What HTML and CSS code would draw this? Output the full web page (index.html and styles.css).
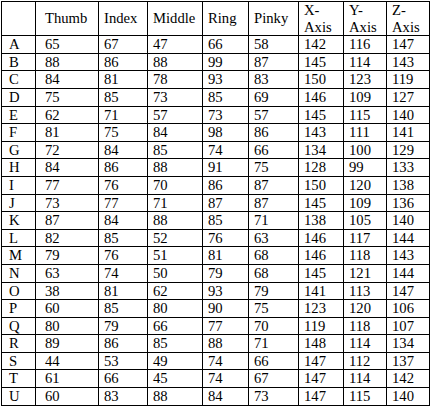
FILE: index.html
```html
<!DOCTYPE html>
<html>
<head>
<meta charset="utf-8">
<link rel="stylesheet" href="styles.css">
</head>
<body>
<table class="data">
<colgroup>
<col class="c0"><col class="c1"><col class="c2"><col class="c3"><col class="c4"><col class="c5"><col class="c6"><col class="c7"><col class="c8">
</colgroup>
<thead>
<tr><th class="lbl"></th><th class="thumb">Thumb</th><th>Index</th><th>Middle</th><th>Ring</th><th>Pinky</th><th>X-<br>Axis</th><th>Y-<br>Axis</th><th>Z-<br>Axis</th></tr>
</thead>
<tbody>
<tr><td class="lbl">A</td><td class="thumb">65</td><td>67</td><td>47</td><td>66</td><td>58</td><td>142</td><td>116</td><td>147</td></tr>
<tr><td class="lbl">B</td><td class="thumb">88</td><td>86</td><td>88</td><td>99</td><td>87</td><td>145</td><td>114</td><td>143</td></tr>
<tr><td class="lbl">C</td><td class="thumb">84</td><td>81</td><td>78</td><td>93</td><td>83</td><td>150</td><td>123</td><td>119</td></tr>
<tr><td class="lbl">D</td><td class="thumb">75</td><td>85</td><td>73</td><td>85</td><td>69</td><td>146</td><td>109</td><td>127</td></tr>
<tr><td class="lbl">E</td><td class="thumb">62</td><td>71</td><td>57</td><td>73</td><td>57</td><td>145</td><td>115</td><td>140</td></tr>
<tr><td class="lbl">F</td><td class="thumb">81</td><td>75</td><td>84</td><td>98</td><td>86</td><td>143</td><td>111</td><td>141</td></tr>
<tr><td class="lbl">G</td><td class="thumb">72</td><td>84</td><td>85</td><td>74</td><td>66</td><td>134</td><td>100</td><td>129</td></tr>
<tr><td class="lbl">H</td><td class="thumb">84</td><td>86</td><td>88</td><td>91</td><td>75</td><td>128</td><td>99</td><td>133</td></tr>
<tr><td class="lbl">I</td><td class="thumb">77</td><td>76</td><td>70</td><td>86</td><td>87</td><td>150</td><td>120</td><td>138</td></tr>
<tr><td class="lbl">J</td><td class="thumb">73</td><td>77</td><td>71</td><td>87</td><td>87</td><td>145</td><td>109</td><td>136</td></tr>
<tr><td class="lbl">K</td><td class="thumb">87</td><td>84</td><td>88</td><td>85</td><td>71</td><td>138</td><td>105</td><td>140</td></tr>
<tr><td class="lbl">L</td><td class="thumb">82</td><td>85</td><td>52</td><td>76</td><td>63</td><td>146</td><td>117</td><td>144</td></tr>
<tr><td class="lbl">M</td><td class="thumb">79</td><td>76</td><td>51</td><td>81</td><td>68</td><td>146</td><td>118</td><td>143</td></tr>
<tr><td class="lbl">N</td><td class="thumb">63</td><td>74</td><td>50</td><td>79</td><td>68</td><td>145</td><td>121</td><td>144</td></tr>
<tr><td class="lbl">O</td><td class="thumb">38</td><td>81</td><td>62</td><td>93</td><td>79</td><td>141</td><td>113</td><td>147</td></tr>
<tr><td class="lbl">P</td><td class="thumb">60</td><td>85</td><td>80</td><td>90</td><td>75</td><td>123</td><td>120</td><td>106</td></tr>
<tr><td class="lbl">Q</td><td class="thumb">80</td><td>79</td><td>66</td><td>77</td><td>70</td><td>119</td><td>118</td><td>107</td></tr>
<tr><td class="lbl">R</td><td class="thumb">89</td><td>86</td><td>85</td><td>88</td><td>71</td><td>148</td><td>114</td><td>134</td></tr>
<tr><td class="lbl">S</td><td class="thumb">44</td><td>53</td><td>49</td><td>74</td><td>66</td><td>147</td><td>112</td><td>137</td></tr>
<tr><td class="lbl">T</td><td class="thumb">61</td><td>66</td><td>45</td><td>74</td><td>67</td><td>147</td><td>114</td><td>142</td></tr>
<tr><td class="lbl">U</td><td class="thumb">60</td><td>83</td><td>88</td><td>84</td><td>73</td><td>147</td><td>115</td><td>140</td></tr>
</tbody>
</table>
</body>
</html>
```
FILE: styles.css
```css
html, body {
  margin: 0;
  padding: 0;
  background: #ffffff;
}
body {
  padding: 1px 0 0 1px;
}
.data {
  border-collapse: collapse;
  table-layout: fixed;
  width: 428px;
  font-family: "Liberation Serif", "Times New Roman", serif;
  font-size: 14.67px;
  line-height: 16.6px;
  color: #000;
}
.data th, .data td {
  border: 1px solid #000;
  padding: 0 0 0 5px;
  text-align: left;
  font-weight: normal;
  vertical-align: top;
  white-space: nowrap;
}
.data th {
  vertical-align: middle;
}
.data .lbl {
  padding-left: 7px;
}
.data .thumb {
  padding-left: 9px;
}
.c0 { width: 34px; }
.c1 { width: 63px; }
.c2 { width: 49px; }
.c3 { width: 55px; }
.c4 { width: 46px; }
.c5 { width: 50px; }
.c6 { width: 45px; }
.c7 { width: 43px; }
.c8 { width: 43px; }
```
